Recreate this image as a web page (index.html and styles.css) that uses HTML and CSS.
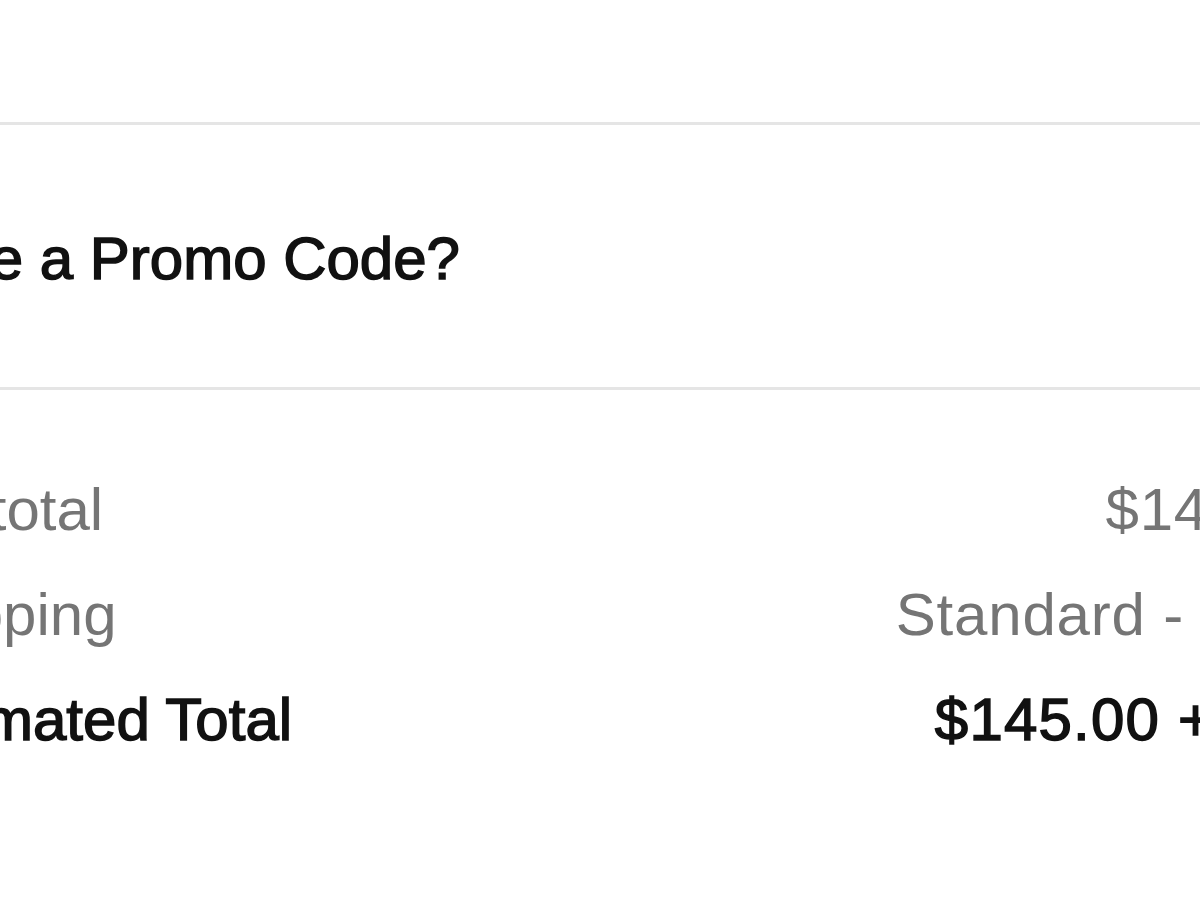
FILE: index.html
```html
<!DOCTYPE html>
<html lang="en">
<head>
<meta charset="utf-8">
<title>Summary</title>
<link rel="stylesheet" href="styles.css">
</head>
<body>
<div class="viewport">
  <section class="summary">
    <div class="promo">
      <span class="promo-label">Have a Promo Code?</span>
    </div>
    <div class="totals">
      <div class="row muted"><span>Subtotal</span><span class="value">$145.00</span></div>
      <div class="row muted"><span>Shipping</span><span class="value">Standard - Free</span></div>
      <div class="row strong"><span>Estimated Total</span><span class="value">$145.00 + Tax</span></div>
    </div>
  </section>
</div>
</body>
</html>
```
FILE: styles.css
```css
html, body {
  margin: 0;
  padding: 0;
  background: #ffffff;
}
body {
  font-family: "Liberation Sans", Arial, Helvetica, sans-serif;
  overflow: hidden;
}
.viewport {
  width: 1200px;
  height: 900px;
  overflow: hidden;
  padding-top: 122px;
  box-sizing: border-box;
}
.summary {
  width: 1445px;
  margin-left: -117px;
}
.promo {
  border-top: 3px solid #e5e5e5;
  border-bottom: 3px solid #e5e5e5;
  padding: 89px 0 83px;
  font-size: 60px;
  line-height: 90px;
  color: #111111;
}
.promo-label {
  -webkit-text-stroke: 1.5px #111111;
}
.totals {
  padding-top: 67px;
  font-size: 60px;
  line-height: 105px;
}
.row {
  display: flex;
  justify-content: space-between;
}
.muted {
  color: #757575;
}
.muted .value {
  letter-spacing: 0.8px;
}
.strong {
  color: #111111;
  -webkit-text-stroke: 1.5px #111111;
}
.strong .value {
  letter-spacing: 1.2px;
}
```
